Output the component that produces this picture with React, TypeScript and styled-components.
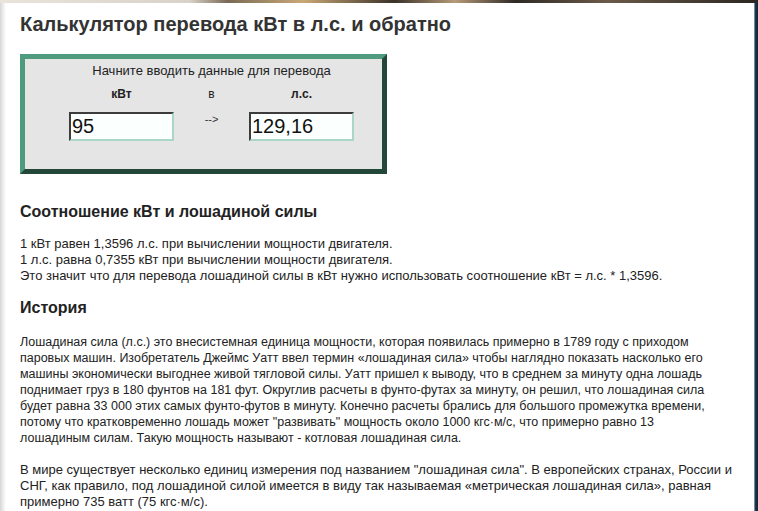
import React from 'react';
import styled, { createGlobalStyle } from 'styled-components';

const GlobalStyle = createGlobalStyle`
    html, body {
        margin: 0;
        padding: 0;
        background: #ffffff;
    }
    body {
        font-family: 'Liberation Sans', Arial, sans-serif;
        color: #222222;
    }
`;

const Page = styled.div`
    width: 758px;
    height: 511px;
    overflow: hidden;
    display: flex;
    flex-flow: column;
    background: #ffffff;
`;

const TopStrip = styled.div`
    height: 3px;
    flex-shrink: 0;
    background: linear-gradient(
        90deg,
        #e8e4dc 0%,
        #d8d2c8 25%,
        #7a6a55 30%,
        #c9a877 40%,
        #3a3128 52%,
        #b79a78 60%,
        #2e2a26 68%,
        #6b5a48 80%,
        #2a2622 100%
    );
`;

const Body = styled.div`
    flex: 1;
    display: flex;
    flex-flow: row;
`;

const LeftEdge = styled.div`
    width: 6px;
    flex-shrink: 0;
    background: linear-gradient(90deg, #d6d6d6 0%, #f4f4f4 70%, #ffffff 100%);
`;

const RightEdge = styled.div`
    width: 4px;
    flex-shrink: 0;
    background: linear-gradient(90deg, #9fb2c4 0%, #1c2e42 40%, #14263a 100%);
`;

const Content = styled.div`
    flex: 1;
    padding: 0 0 0 14px;
`;

const Title = styled.h1`
    margin: 10px 0 0;
    font-size: 20px;
    line-height: 22px;
    font-weight: bold;
    color: #333333;
`;

const Converter = styled.div`
    margin-top: 19px;
    width: 313px;
    height: 110px;
    background: #e5e5e5;
    border-style: solid;
    border-width: 5px;
    border-color: #4f9b80 #23483a #23483a #4f9b80;
    padding: 0 0 0 44px;
    box-sizing: content-box;
    display: grid;
    grid-template-columns: 105px 75px 105px;
    grid-template-rows: 20px 26px 34px;
    align-content: start;
`;

const Hint = styled.div`
    grid-column: 1 / 4;
    margin-top: 4px;
    text-align: center;
    font-size: 13px;
    line-height: 16px;
    color: #222222;
`;

const Label = styled.div<{ $bold?: boolean }>`
    text-align: center;
    font-size: 12px;
    line-height: 16px;
    font-weight: ${({ $bold }): string => ($bold ? 'bold' : 'normal')};
    color: #222222;
    padding-top: 7px;
`;

const Arrow = styled.div`
    text-align: center;
    font-size: 11px;
    line-height: 14px;
    padding-top: 7px;
    color: #333333;
`;

const ValueInput = styled.input`
    margin-top: 7px;
    width: 105px;
    height: 29px;
    box-sizing: border-box;
    border-style: solid;
    border-width: 2px;
    border-color: #3c3c3c #a9d6c6 #a9d6c6 #3c3c3c;
    background: #fbfffd;
    padding: 0 0 0 1px;
    font-family: 'Liberation Sans', Arial, sans-serif;
    font-size: 20px;
    color: #111111;
    outline: none;
`;

const SectionTitle = styled.h2<{ $gap: number }>`
    margin: ${({ $gap }): string => `${$gap}px`} 0 0;
    font-size: 16px;
    line-height: 20px;
    font-weight: bold;
    color: #222222;
`;

const Paragraph = styled.p<{ $gap: number; $size?: number }>`
    margin: ${({ $gap }): string => `${$gap}px`} 0 0;
    font-size: ${({ $size }): string => `${$size ?? 13}px`};
    line-height: 16px;
    color: #222222;
    white-space: nowrap;
`;

const App: React.FC = () => (
    <>
        <GlobalStyle />
        <Page>
            <TopStrip />
            <Body>
                <LeftEdge />
                <Content>
                    <Title>Калькулятор перевода кВт в л.с. и обратно</Title>
                    <Converter>
                        <Hint>Начните вводить данные для перевода</Hint>
                        <Label $bold>кВт</Label>
                        <Label>в</Label>
                        <Label $bold>л.с.</Label>
                        <ValueInput defaultValue="95" />
                        <Arrow>--&gt;</Arrow>
                        <ValueInput defaultValue="129,16" />
                    </Converter>

                    <SectionTitle $gap={28}>Соотношение кВт и лошадиной силы</SectionTitle>
                    <Paragraph $gap={14}>
                        1 кВт равен 1,3596 л.с. при вычислении мощности двигателя.
                        <br />
                        1 л.с. равна 0,7355 кВт при вычислении мощности двигателя.
                        <br />
                        Это значит что для перевода лошадиной силы в кВт нужно использовать
                        соотношение кВт = л.с. * 1,3596.
                    </Paragraph>

                    <SectionTitle $gap={14}>История</SectionTitle>
                    <Paragraph $gap={16} $size={12.5}>
                        Лошадиная сила (л.с.) это внесистемная единица мощности, которая
                        появилась примерно в 1789 году с приходом
                        <br />
                        паровых машин. Изобретатель Джеймс Уатт ввел термин «лошадиная сила»
                        чтобы наглядно показать насколько его
                        <br />
                        машины экономически выгоднее живой тягловой силы. Уатт пришел к
                        выводу, что в среднем за минуту одна лошадь
                        <br />
                        поднимает груз в 180 фунтов на 181 фут. Округлив расчеты в
                        фунто-футах за минуту, он решил, что лошадиная сила
                        <br />
                        будет равна 33 000 этих самых фунто-футов в минуту. Конечно расчеты
                        брались для большого промежутка времени,
                        <br />
                        потому что кратковременно лошадь может "развивать" мощность около
                        1000 кгс·м/с, что примерно равно 13
                        <br />
                        лошадиным силам. Такую мощность называют - котловая лошадиная сила.
                    </Paragraph>
                    <Paragraph $gap={16}>
                        В мире существует несколько единиц измерения под названием
                        "лошадиная сила". В европейских странах, России и
                        <br />
                        СНГ, как правило, под лошадиной силой имеется в виду так называемая
                        «метрическая лошадиная сила», равная
                        <br />
                        примерно 735 ватт (75 кгс·м/с).
                    </Paragraph>
                </Content>
                <RightEdge />
            </Body>
        </Page>
    </>
);

export default App;
